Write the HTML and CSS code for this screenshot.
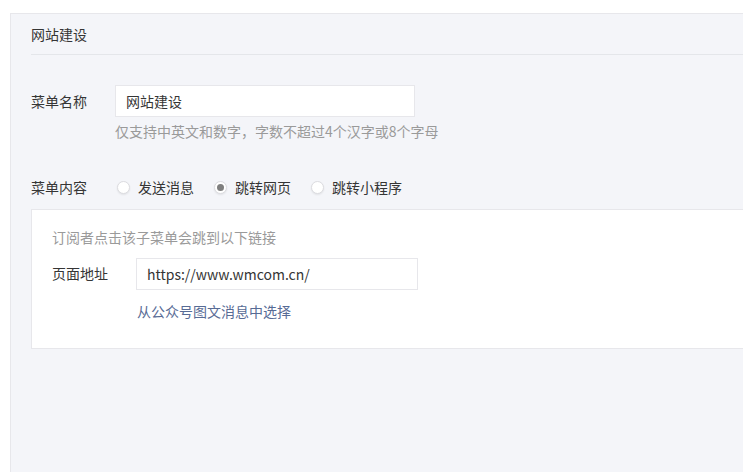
FILE: index.html
```html
<!DOCTYPE html>
<html lang="zh-CN">
<head>
<meta charset="utf-8">
<title>菜单设置</title>
<link rel="stylesheet" href="styles.css">
</head>
<body>
<div class="panel">
  <div class="panel-head">网站建设</div>
  <div class="form">
    <div class="row">
      <div class="label">菜单名称</div>
      <div class="field">
        <div class="input input-name">网站建设</div>
        <div class="hint">仅支持中英文和数字，字数不超过4个汉字或8个字母</div>
      </div>
    </div>
    <div class="row row-radio">
      <div class="label">菜单内容</div>
      <div class="radios">
        <span class="radio"><i class="dot"></i>发送消息</span>
        <span class="radio checked"><i class="dot"></i>跳转网页</span>
        <span class="radio"><i class="dot"></i>跳转小程序</span>
      </div>
    </div>
    <div class="box">
      <div class="box-tip">订阅者点击该子菜单会跳到以下链接</div>
      <div class="row row-url">
        <div class="label">页面地址</div>
        <div class="field">
          <div class="input input-url">https://www.wmcom.cn/</div>
          <div class="link">从公众号图文消息中选择</div>
        </div>
      </div>
    </div>
  </div>
</div>
</body>
</html>
```
FILE: styles.css
```css
html, body {
  margin: 0;
  padding: 0;
  background: #ffffff;
  height: 100%;
  overflow: hidden;
}
body {
  font-family: "Microsoft YaHei", "Noto Sans CJK SC", "Noto Sans", sans-serif;
  font-size: 14px;
  color: #353535;
}
.panel {
  margin: 13px 0 0 10px;
  border-top: 1px solid #e7e7eb;
  border-left: 1px solid #e7e7eb;
  background: #f4f5f9;
  height: calc(100% - 14px);
  padding-left: 20px;
  box-sizing: border-box;
}
.panel-head {
  height: 40px;
  line-height: 40px;
  border-bottom: 1px solid #e4e6ea;
}
.form {
  padding-top: 30px;
}
.row {
  display: flex;
  align-items: flex-start;
}
.label {
  width: 84px;
  flex: none;
  line-height: 32px;
}
.input {
  height: 32px;
  line-height: 30px;
  box-sizing: border-box;
  border: 1px solid #e7e7eb;
  background: #fff;
  padding-left: 10px;
}
.input-name {
  width: 300px;
}
.hint {
  margin-top: 4px;
  line-height: 20px;
  color: #9a9a9a;
}
.row-radio {
  margin-top: 35px;
  align-items: center;
  height: 22px;
}
.row-radio .label {
  line-height: 22px;
}
.radios {
  display: flex;
  align-items: center;
  gap: 20px;
  padding-left: 2px;
}
.radio {
  display: inline-flex;
  align-items: center;
  gap: 8px;
  line-height: 22px;
}
.dot {
  width: 13px;
  height: 13px;
  box-sizing: border-box;
  border-radius: 50%;
  border: 1px solid #dcdce0;
  background: #fff;
  box-shadow: 0 1px 2px rgba(0,0,0,0.08);
  display: inline-flex;
  align-items: center;
  justify-content: center;
}
.radio.checked .dot::after {
  content: "";
  width: 7px;
  height: 7px;
  border-radius: 50%;
  background: #7f7f7f;
}
.box {
  margin-top: 11px;
  background: #fff;
  border: 1px solid #e7e7eb;
  border-right: none;
  height: 140px;
  box-sizing: border-box;
  padding: 17px 0 0 20px;
}
.box-tip {
  line-height: 20px;
  color: #9a9a9a;
}
.row-url {
  margin-top: 11px;
}
.row-url .label {
  line-height: 30px;
}
.input-url {
  width: 282px;
  font-size: 14px;
}
.link {
  margin-top: 11px;
  line-height: 20px;
  color: #576b95;
  padding-left: 1px;
}
```
